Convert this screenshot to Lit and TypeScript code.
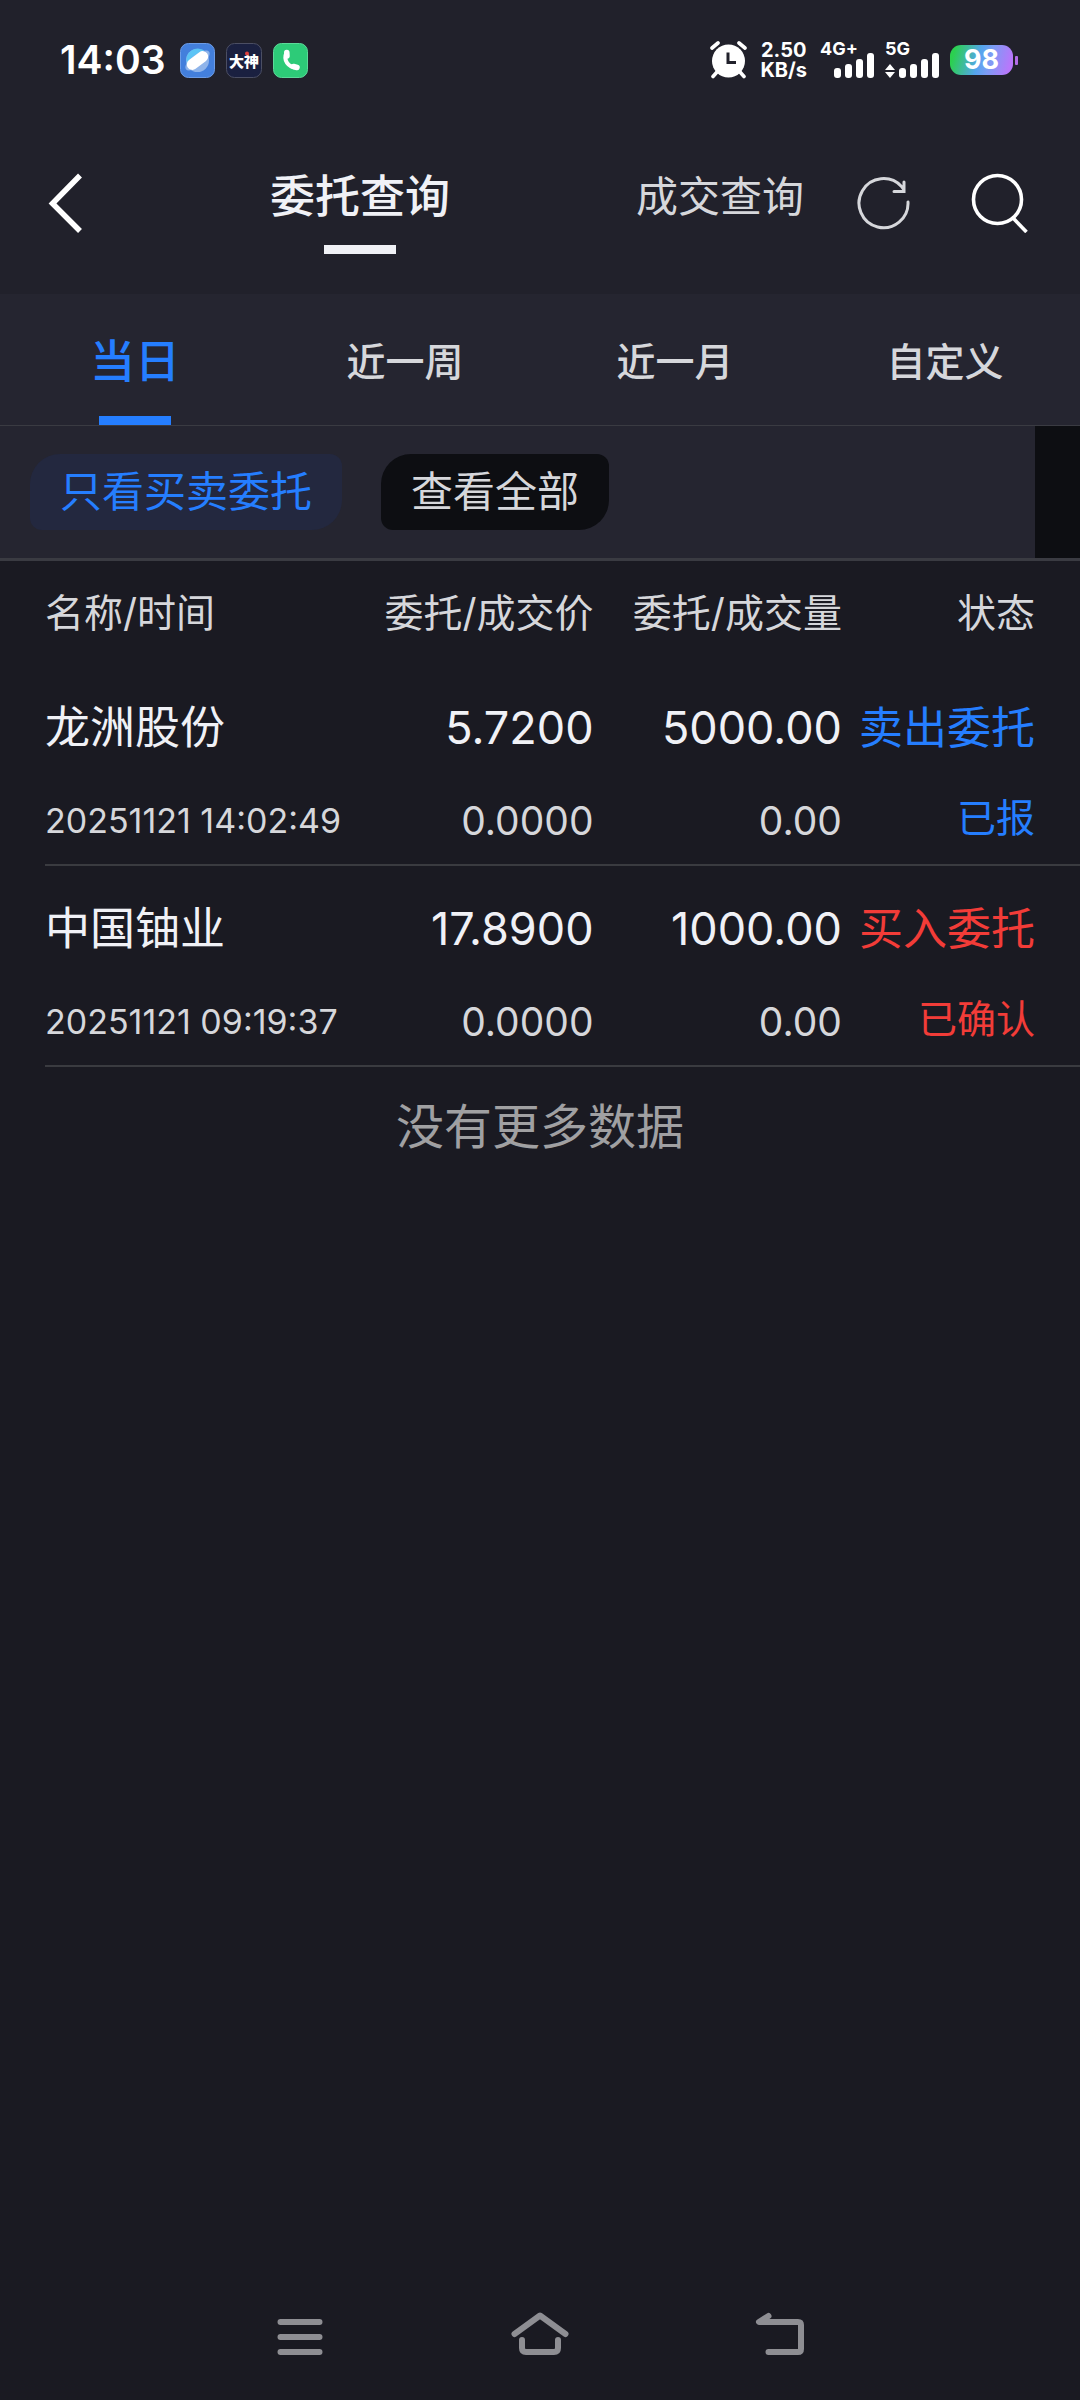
import { LitElement, html, svg, css } from "lit";
import { customElement, state } from "lit/decorators.js";
import { classMap } from "lit/directives/class-map.js";

interface Order {
  name: string;
  time: string;
  price: string;
  dealPrice: string;
  amount: string;
  dealAmount: string;
  side: "sell" | "buy";
  action: string;
  status: string;
}

const ORDERS: Order[] = [
  {
    name: "龙洲股份",
    time: "20251121 14:02:49",
    price: "5.7200",
    dealPrice: "0.0000",
    amount: "5000.00",
    dealAmount: "0.00",
    side: "sell",
    action: "卖出委托",
    status: "已报",
  },
  {
    name: "中国铀业",
    time: "20251121 09:19:37",
    price: "17.8900",
    dealPrice: "0.0000",
    amount: "1000.00",
    dealAmount: "0.00",
    side: "buy",
    action: "买入委托",
    status: "已确认",
  },
];

@customElement("phone-status-bar")
export class PhoneStatusBar extends LitElement {
  static styles = css`
    :host {
      display: flex;
      align-items: center;
      justify-content: space-between;
      height: 120px;
      padding: 0 62px 0 60px;
      color: #fff;
      font-weight: 700;
    }
    .group {
      display: flex;
      align-items: center;
      gap: 11px;
    }
    .time {
      font-size: 39px;
      line-height: 48px;
      font-weight: 600;
      margin-right: 4px;
    }
    svg {
      display: block;
    }
    .speed {
      display: flex;
      flex-direction: column;
      align-items: center;
      margin: 0 2px;
      font-size: 20px;
      line-height: 20px;
    }
    .signal {
      display: grid;
      height: 40px;
    }
    .signal > * {
      grid-area: 1 / 1;
    }
    .net {
      font-size: 18px;
      line-height: 18px;
    }
    .battery {
      display: flex;
      align-items: center;
      gap: 2px;
    }
    .level {
      display: flex;
      align-items: center;
      justify-content: center;
      width: 63px;
      height: 30px;
      border-radius: 11px;
      background: linear-gradient(105deg, #2bd04f 8%, #55a5ee 46%, #7c9cf4 62%, #b877fb 92%);
      font-size: 27px;
      line-height: 30px;
    }
    .nub {
      width: 3px;
      height: 9px;
      border-radius: 1px;
      background: #b46ce8;
    }
  `;

  private bars(x: number) {
    return [10, 14, 19, 25].map(
      (h, i) => svg`<rect x=${x + i * 11} y=${38 - h} width="7" height=${h} rx="3" />`
    );
  }

  render() {
    return html`
      <div class="group">
        <span class="time">14:03</span>
        <svg width="35" height="35" viewBox="0 0 35 35" role="img" aria-label="浏览器">
          <rect x="0.5" y="0.5" width="34" height="34" rx="8" fill="#437fdc" stroke="#6c9ce6" />
          <circle cx="17.5" cy="17.5" r="11.5" fill="#8fb4ea" />
          <path d="M7 21 A11.5 11.5 0 0 1 26 9 Z" fill="#5cc4f5" />
          <ellipse cx="17.5" cy="17.5" rx="14.5" ry="6" fill="#8fb4ea" transform="rotate(-37 17.5 17.5)" />
          <rect x="5.5" y="12" width="24" height="11" rx="5.5" fill="#fff" transform="rotate(-37 17.5 17.5)" />
        </svg>
        <svg width="36" height="35" viewBox="0 0 36 35" role="img" aria-label="大神">
          <rect x="0.5" y="0.5" width="35" height="34" rx="8" fill="#1a2040" stroke="#4b4e63" />
          <text x="18" y="24" text-anchor="middle" fill="#fff" font-size="15" font-weight="900">大神</text>
          <circle cx="21" cy="10.5" r="2" fill="#e0403c" />
        </svg>
        <svg width="35" height="35" viewBox="0 0 35 35" role="img" aria-label="电话">
          <rect x="0.5" y="0.5" width="34" height="34" rx="8" fill="#2dcb78" stroke="#5cd999" />
          <path d="M13.5 9.5 C10 17 15 24.5 24 24.5" fill="none" stroke="#fff" stroke-width="4" stroke-linecap="round" />
          <path d="M13.8 9.5 L14 13 M20.500 23.5 L24 24.5" stroke="#fff" stroke-width="5.5" stroke-linecap="round" />
        </svg>
      </div>
      <div class="group">
        <svg width="37" height="38" viewBox="0 0 37 38" role="img" aria-label="闹钟">
          <circle cx="18.5" cy="20" r="16.5" fill="#fff" />
          <path d="M2 7 L8 2 M29 2 L35 7 M7 31 L3 35.5 M30 31 L34 35.5" stroke="#fff" stroke-width="3.6" stroke-linecap="round" />
          <path d="M18 11.5 V21.5 H26" fill="none" stroke="#21212b" stroke-width="3" />
        </svg>
        <div class="speed"><span>2.50</span><span>KB/s</span></div>
        <div class="signal">
          <span class="net">4G+</span>
          <svg width="54" height="40" viewBox="0 0 54 40" fill="#fff" aria-hidden="true">${this.bars(14)}</svg>
        </div>
        <div class="signal">
          <span class="net">5G</span>
          <svg width="54" height="40" viewBox="0 0 54 40" fill="#fff" aria-hidden="true">
            <path d="M0 30 L5 24 L10 30 Z M0 32 L5 38 L10 32 Z" />
            ${this.bars(14)}
          </svg>
        </div>
        <div class="battery"><span class="level">98</span><span class="nub"></span></div>
      </div>
    `;
  }
}

@customElement("app-root")
export class AppRoot extends LitElement {
  static styles = css`
    :host {
      display: flex;
      flex-direction: column;
      min-height: 100vh;
      background: #1a1a22;
      color: #d6d7db;
      font-family: Inter, "Noto Sans CJK SC", sans-serif;
    }
    phone-status-bar,
    .topbar {
      background: #21212b;
    }
    button {
      margin: 0;
      padding: 0;
      border: 0;
      background: none;
      color: inherit;
      font: inherit;
      cursor: pointer;
    }
    svg {
      display: block;
      fill: none;
    }
    .topbar {
      display: grid;
      grid-template-columns: 2fr 2fr 1fr 2fr 2fr;
      height: 174px;
    }
    .back {
      display: flex;
      align-items: center;
      padding: 0 0 8px 45px;
    }
    .mode {
      display: flex;
      flex-direction: column;
      align-items: center;
      padding-top: 47px;
      font-size: 42px;
      line-height: 60px;
    }
    .mode.right {
      grid-column: 4;
    }
    .mode.on {
      color: #f0f1f6;
      font-size: 45px;
      font-weight: 500;
    }
    .mode.on::after {
      content: "";
      width: 72px;
      height: 9px;
      margin-top: 18px;
      background: #f0f1f6;
    }
    .tools {
      display: flex;
      align-items: center;
      justify-content: flex-end;
      gap: 60px;
      padding: 0 50px 8px 0;
    }
    .ranges {
      display: grid;
      grid-template-columns: repeat(4, 1fr);
      height: 131px;
      border-bottom: 1px solid #3a3b42;
      background: #252530;
    }
    .range {
      display: flex;
      flex-direction: column;
      align-items: center;
      padding-top: 38px;
      font-size: 39px;
      line-height: 60px;
      font-weight: 500;
    }
    .range.on {
      color: #257eff;
      font-size: 45px;
    }
    .range.on::after {
      content: "";
      width: 72px;
      height: 9px;
      margin-top: auto;
      background: #257eff;
    }
    .filters {
      display: flex;
      align-items: center;
      gap: 39px;
      height: 132px;
      padding-left: 30px;
      border-bottom: 3px solid #3a3b42;
      background: #252530;
    }
    .chip {
      height: 76px;
      padding: 0 30px;
      border-radius: 30px 12px 30px 12px;
      background: #0d0e12;
      font-size: 42px;
      line-height: 76px;
      white-space: nowrap;
    }
    .chip.on {
      background: #23283f;
      color: #257eff;
    }
    .edge {
      align-self: stretch;
      width: 45px;
      margin-left: auto;
      background: #0d0e12;
    }
    .orders {
      width: calc(100% - 45px);
      margin-left: 45px;
      border-collapse: separate;
      border-spacing: 0;
      table-layout: fixed;
    }
    .c-name {
      width: 29%;
    }
    .c-num {
      width: 24%;
    }
    th,
    td {
      padding: 0;
      text-align: right;
      font-weight: 400;
      white-space: nowrap;
      vertical-align: top;
    }
    th {
      height: 104px;
      font-size: 39px;
      line-height: 106px;
    }
    th:first-child,
    td:first-child {
      text-align: left;
    }
    th:last-child,
    td:last-child {
      padding-right: 45px;
    }
    thead tr {
      height: 104px;
    }
    th {
      padding: 0;
      line-height: 104px;
    }
    td {
      padding: 33px 0 13px;
      border-bottom: 2px solid #3a3b40;
    }
    .main,
    .sub {
      display: block;
      line-height: 60px;
    }
    .sub {
      margin-top: 33px;
      font-size: 39px;
    }
    .main {
      color: #f0f1f6;
      font-size: 45px;
    }
    .date {
      font-size: 34px;
    }
    .sell,
    .sell .main {
      color: #257eff;
    }
    .buy,
    .buy .main {
      color: #f23c38;
    }
    .state .main {
      font-size: 44px;
    }
    .state .sub {
      margin-top: 30px;
    }
    .end {
      margin: 0;
      padding-top: 30px;
      color: #a0a0a2;
      font-size: 48px;
      line-height: 60px;
      text-align: center;
    }
    .nav {
      display: flex;
      justify-content: center;
      margin-top: auto;
      padding-bottom: 35px;
    }
    .nav button {
      display: flex;
      justify-content: center;
      width: 240px;
    }
  `;

  @state() private mode = 0;
  @state() private range = 0;
  @state() private filter = 0;

  render() {
    return html`
      <phone-status-bar></phone-status-bar>
      <header class="topbar">
        <button class="back" aria-label="返回">
          <svg width="42" height="60" viewBox="0 0 42 60" stroke="#fff" stroke-width="5.5">
            <path d="M35 2.5 L7.5 30.5 L35 58" />
          </svg>
        </button>
        ${["委托查询", "成交查询"].map(
          (t, i) => html`<button
            class=${classMap({ mode: true, right: i === 1, on: this.mode === i })}
            @click=${() => (this.mode = i)}
          >${t}</button>`
        )}
        <div class="tools">
          <button aria-label="刷新">
            <svg width="54" height="54" viewBox="0 0 54 54" stroke="#d6d7db" stroke-width="3">
              <path d="M52 26 A24.5 24.5 0 1 1 45.5 10.5 L48 14 M48 6 V15.500 H38" stroke-linecap="round" />
            </svg>
          </button>
          <button aria-label="搜索">
            <svg width="60" height="60" viewBox="0 0 60 60" stroke="#fff" stroke-width="3.6">
              <circle cx="27.5" cy="26.5" r="24" />
              <path d="M43.5 45.5 L56.5 59" />
            </svg>
          </button>
        </div>
      </header>
      <nav class="ranges" aria-label="时间范围">
        ${["当日", "近一周", "近一月", "自定义"].map(
          (t, i) => html`<button
            class=${classMap({ range: true, on: this.range === i })}
            @click=${() => (this.range = i)}
          >${t}</button>`
        )}
      </nav>
      <div class="filters">
        ${["只看买卖委托", "查看全部"].map(
          (t, i) => html`<button
            class=${classMap({ chip: true, on: this.filter === i })}
            @click=${() => (this.filter = i)}
          >${t}</button>`
        )}
        <span class="edge"></span>
      </div>
      <main>
        <table class="orders">
          <colgroup>
            <col class="c-name" />
            <col class="c-num" />
            <col class="c-num" />
            <col />
          </colgroup>
          <thead>
            <tr>
              <th scope="col">名称/时间</th>
              <th scope="col">委托/成交价</th>
              <th scope="col">委托/成交量</th>
              <th scope="col">状态</th>
            </tr>
          </thead>
          <tbody>
            ${ORDERS.map(
              (o) => html`<tr>
                <td><span class="main">${o.name}</span><span class="sub date">${o.time}</span></td>
                <td><span class="main">${o.price}</span><span class="sub">${o.dealPrice}</span></td>
                <td><span class="main">${o.amount}</span><span class="sub">${o.dealAmount}</span></td>
                <td class="state ${o.side}">
                  <span class="main">${o.action}</span><span class="sub">${o.status}</span>
                </td>
              </tr>`
            )}
          </tbody>
        </table>
        <p class="end">没有更多数据</p>
      </main>
      <footer class="nav">
        <button aria-label="最近任务">
          <svg width="60" height="60" viewBox="0 0 60 60" stroke="#8e8e93" stroke-width="6" stroke-linecap="round">
            <path d="M10.5 17 H49.5 M10.5 32 H49.5 M10.5 47 H49.5" />
          </svg>
        </button>
        <button aria-label="主屏幕">
          <svg width="60" height="60" viewBox="0 0 60 60" stroke="#8e8e93" stroke-width="6" stroke-linecap="round" stroke-linejoin="round">
            <path d="M4.5 29 L30 10.5 L55.5 29" />
            <path d="M12 35 V43 Q12 47 16 47 H44 Q48 47 48 43 V35" />
          </svg>
        </button>
        <button aria-label="返回上一页">
          <svg width="60" height="60" viewBox="0 0 60 60" stroke="#8e8e93" stroke-width="6" stroke-linecap="round" stroke-linejoin="round">
            <path d="M18.5 11 L9 17 H48 Q51 17 51 20 V44 Q51 47 48 47 H18.5" />
          </svg>
        </button>
      </footer>
    `;
  }
}
